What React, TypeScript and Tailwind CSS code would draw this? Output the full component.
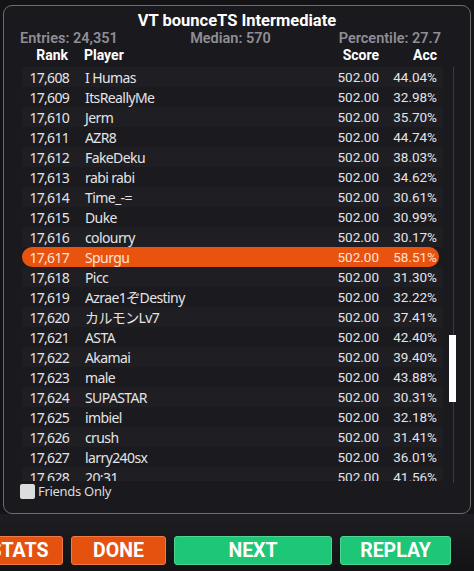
import React from 'react';

interface Row {
  rank: string;
  name: string;
  score: string;
  acc: string;
  me?: boolean;
}

const rows: Row[] = [
  { rank: '17,608', name: 'I Humas', score: '502.00', acc: '44.04%' },
  { rank: '17,609', name: 'ItsReallyMe', score: '502.00', acc: '32.98%' },
  { rank: '17,610', name: 'Jerm', score: '502.00', acc: '35.70%' },
  { rank: '17,611', name: 'AZR8', score: '502.00', acc: '44.74%' },
  { rank: '17,612', name: 'FakeDeku', score: '502.00', acc: '38.03%' },
  { rank: '17,613', name: 'rabi rabi', score: '502.00', acc: '34.62%' },
  { rank: '17,614', name: 'Time_-=', score: '502.00', acc: '30.61%' },
  { rank: '17,615', name: 'Duke', score: '502.00', acc: '30.99%' },
  { rank: '17,616', name: 'colourry', score: '502.00', acc: '30.17%' },
  { rank: '17,617', name: 'Spurgu', score: '502.00', acc: '58.51%', me: true },
  { rank: '17,618', name: 'Picc', score: '502.00', acc: '31.30%' },
  { rank: '17,619', name: 'Azrae1ぞDestiny', score: '502.00', acc: '32.22%' },
  { rank: '17,620', name: 'カルモンLv7', score: '502.00', acc: '37.41%' },
  { rank: '17,621', name: 'ASTA', score: '502.00', acc: '42.40%' },
  { rank: '17,622', name: 'Akamai', score: '502.00', acc: '39.40%' },
  { rank: '17,623', name: 'male', score: '502.00', acc: '43.88%' },
  { rank: '17,624', name: 'SUPASTAR', score: '502.00', acc: '30.31%' },
  { rank: '17,625', name: 'imbiel', score: '502.00', acc: '32.18%' },
  { rank: '17,626', name: 'crush', score: '502.00', acc: '31.41%' },
  { rank: '17,627', name: 'larry240sx', score: '502.00', acc: '36.01%' },
  { rank: '17,628', name: '20:31', score: '502.00', acc: '41.56%' },
];

const noto = "font-['Noto_Sans','Noto_Sans_CJK_JP',sans-serif]";
const roboto = "font-['Roboto',sans-serif]";

export default function App() {
  return (
    <div className={`w-[474px] h-[571px] overflow-hidden bg-[#141316] flex flex-col ${roboto}`}>
      {/* leaderboard panel */}
      <div className="mx-[3px] mt-[5px] h-[509px] rounded-[9px] border border-[#6c6b70] bg-[#1a191d] flex flex-col">
        <div className="pt-[5px] text-center text-[16.5px] leading-[20px] font-bold text-white">
          VT bounceTS Intermediate
        </div>
        <div className="flex pl-[16px] pr-[29px] text-[14.5px] leading-[16px] font-semibold text-[#8f8e96]">
          <div className="flex-1">Entries: 24,351</div>
          <div className="flex-1 text-center">Median: 570</div>
          <div className="flex-1 text-right">Percentile: 27.7</div>
        </div>
        <div className="flex ml-[18px] w-[421px] pr-[6px] text-[14px] leading-[16px] font-bold text-white">
          <div className="w-[46px] text-right">Rank</div>
          <div className="flex-1 pl-[16px]">Player</div>
          <div className="w-[60px] text-right">Score</div>
          <div className="w-[58px] text-right">Acc</div>
        </div>

        <div className="flex mt-[4px] h-[416px]">
          <div className="ml-[18px] w-[421px] h-[414px] overflow-hidden">
            {rows.map((r, i) => (
              <div
                key={r.rank}
                className={`flex items-center h-[20px] pr-[6px] text-[14px] ${
                  r.me
                    ? 'bg-[#e8540f] rounded-full text-[#ffe3d3] mr-[4px]'
                    : i % 2 === 0
                    ? 'bg-[#1f1e23] text-[#e4e4e6]'
                    : 'bg-[#1b1a1f] text-[#e4e4e6]'
                }`}
              >
                <div className={`w-[47px] text-right tracking-[-0.7px] ${noto}`}>{r.rank}</div>
                <div className={`flex-1 pl-[16px] truncate tracking-[-0.6px] ${noto}`}>{r.name}</div>
                <div className={`w-[60px] text-right text-[13.5px] ${roboto}`}>{r.score}</div>
                <div className={`w-[58px] text-right text-[13.5px] ${roboto} ${r.me ? '-mr-[4px]' : ''}`}>{r.acc}</div>
              </div>
            ))}
          </div>
          {/* scrollbar */}
          <div className="ml-[6px] w-[8px] flex justify-center relative">
            <div className="w-px h-full bg-[#3a393e]" />
            <div className="absolute left-0 top-[268px] w-[7px] h-[67px] bg-white" />
          </div>
        </div>

        <div className={`flex items-center gap-[3px] ml-[16px] ${noto}`}>
          <div className="w-[15px] h-[15px] rounded-[2px] bg-[#dcdcdc]" />
          <span className="text-[13px] leading-[16px] text-[#dcdcdc] tracking-[-0.3px]">Friends Only</span>
        </div>
      </div>

      {/* buttons */}
      <div className="flex-1 bg-gradient-to-b from-[#1e1d21] to-[#131215]">
        <div className="flex gap-[8px] mt-[22px] text-[19.5px] font-bold text-white">
          <div className="ml-[-25px] w-[88px] h-[29px] rounded-[3px] border border-[#f07a45] bg-[#e5520f] flex items-center justify-center">
            STATS
          </div>
          <div className="w-[95px] h-[29px] rounded-[3px] border border-[#f07a45] bg-[#e5520f] flex items-center justify-center">
            DONE
          </div>
          <div className="w-[158px] h-[29px] rounded-[3px] border border-[#4bd494] bg-[#1ec677] flex items-center justify-center">
            NEXT
          </div>
          <div className="w-[111px] h-[29px] rounded-[3px] border border-[#4bd494] bg-[#1ec677] flex items-center justify-center">
            REPLAY
          </div>
        </div>
      </div>
    </div>
  );
}
